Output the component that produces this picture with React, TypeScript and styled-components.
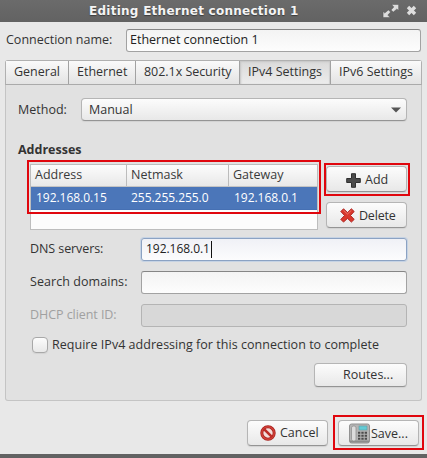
import React from "react";
import styled, { createGlobalStyle, css } from "styled-components";

const GlobalStyle = createGlobalStyle`
  *, *::before, *::after { box-sizing: border-box; }
  body { margin: 0; }
`;

const Window = styled.div`
  width: 427px;
  height: 458px;
  display: flex;
  flex-direction: column;
  overflow: hidden;
  background: #e8e8e8;
  border-bottom: 4px solid #626262;
  color: #333;
  font-family: "Open Sans", "Noto Sans", sans-serif;
  font-size: 12.5px;
  line-height: 16px;
  white-space: nowrap;
`;

const Text = styled.span<{ $ls?: number }>`
  letter-spacing: ${(p) => p.$ls ?? 0}px;
`;

const Digits = styled.span`
  font-size: 12px;
  letter-spacing: -0.04px;
`;

const TitleBar = styled.header`
  height: 22px;
  flex: none;
  display: flex;
  align-items: center;
  padding: 0 10px 1px 89px;
  background: linear-gradient(#6b6b6b, #626262);
  color: #f4f4f4;
  font-family: "DejaVu Sans", sans-serif;
  font-weight: bold;
  font-size: 12px;
  text-shadow: 0 1px 1px #3c3c3c;
`;

const TitleIcons = styled.div`
  margin-left: auto;
  display: flex;
  align-items: center;
  gap: 6px;
`;

const NameRow = styled.div`
  height: 38px;
  flex: none;
  display: flex;
  align-items: flex-start;
  padding: 7px 6px 0 5px;
`;

const NameLabel = styled.div`
  width: 121px;
  padding: 3px 0 0 1px;
`;

const Entry = styled.div<{ $state?: "focus" | "disabled" }>`
  flex: 1;
  height: 23px;
  display: flex;
  align-items: center;
  padding: 0 4px 1px 3px;
  border: 1px solid #a2a2a2;
  border-top-color: #858585;
  border-radius: 3px;
  background: linear-gradient(#f3f3f3, #fdfdfd);
  color: #222;
  ${(p) =>
    p.$state === "focus" &&
    css`
      padding-left: 4px;
      border-color: #8ba2c3;
      background: linear-gradient(#f0f1f6, #fcfcfd);
      box-shadow: 0 0 0 1px #c6d3e4;
    `}
  ${(p) =>
    p.$state === "disabled" &&
    css`
      border-color: #b4b4b4;
      background: #d8d8d8;
    `}
`;

const Caret = styled.i`
  width: 1px;
  height: 17px;
  margin-left: 1px;
  background: #111;
`;

const Tabs = styled.nav`
  height: 25px;
  flex: none;
  margin: 0 5px;
  display: grid;
  grid-template-columns: 62px 67px 104px 91px 91px;
  border: 1px solid #b0b0b0;
  border-bottom-color: #aaa;
  border-radius: 3px 3px 0 0;
`;

const Tab = styled.div<{ $active?: boolean }>`
  display: flex;
  align-items: center;
  padding: 0 0 2px 8px;
  border-left: 1px solid #a2a2a2;
  background: linear-gradient(#fafafa, #e3e3e3);
  &:first-child { border-left: 0; }
  ${(p) =>
    p.$active &&
    css`
      background: linear-gradient(#dadada, #ececec);
      box-shadow: inset 1px 1px 2px #c5c5c5, inset -1px 0 1px #cfcfcf;
    `}
`;

const Panel = styled.main`
  height: 316px;
  flex: none;
  margin: 0 5px;
  padding: 13px 14px 0 12px;
  border: 1px solid #c4c4c4;
  border-top: 0;
  border-radius: 0 0 3px 3px;
  background: #e1e1e1;
`;

const MethodRow = styled.div`
  display: flex;
  align-items: center;
  height: 23px;
`;

const MethodLabel = styled.div`
  width: 63px;
`;

const raised = css`
  border: 1px solid #b5b5b5;
  border-bottom-color: #949494;
  border-radius: 4px;
  background: linear-gradient(#fcfcfc, #e8e8e8);
  box-shadow: 0 1px 1px #d2d2d2;
`;

const Combo = styled.div`
  ${raised}
  flex: 1;
  height: 23px;
  display: flex;
  align-items: center;
  justify-content: space-between;
  padding: 0 5px 0 7px;
`;

const Heading = styled.h2`
  margin: 20px 0 0;
  height: 19px;
  font-size: 12.5px;
  line-height: 18px;
`;

const AddressArea = styled.section`
  display: flex;
  gap: 3px;
  margin-left: 9px;
  height: 75px;
`;

const TableColumn = styled.div`
  position: relative;
  flex: none;
  width: 294px;
  padding: 4px 3px 0;
`;

const Table = styled.div`
  height: 66px;
  border: 1px solid #bdbdbd;
  background: #fcfcfc;
`;

const TableRow = styled.div<{ $selected?: boolean }>`
  display: grid;
  grid-template-columns: 95px 102px 1fr;
  height: ${(p) => (p.$selected ? 23 : 22)}px;
  color: ${(p) => (p.$selected ? "#fff" : "#3a3a3a")};
  background: ${(p) => (p.$selected ? "#4b76b9" : "linear-gradient(#fcfcfc, #e8e8e8)")};
  border-bottom: 1px solid ${(p) => (p.$selected ? "#4670b3" : "#c4c4c4")};
`;

const Cell = styled.div<{ $head?: boolean }>`
  display: flex;
  align-items: center;
  padding: 0 0 1px 4px;
  border-left: 1px solid ${(p) => (p.$head ? "#bcbcbc" : "transparent")};
  &:first-child {
    border-left: 0;
    padding-left: ${(p) => (p.$head ? 4 : 5)}px;
  }
  &:last-child { padding-left: ${(p) => (p.$head ? 4 : 5)}px; }
`;

const Mark = styled.div<{ $inset: string }>`
  position: absolute;
  inset: ${(p) => p.$inset};
  border: 2px solid #e0060d;
  pointer-events: none;
`;

const ButtonColumn = styled.div`
  display: flex;
  flex-direction: column;
  gap: 10px;
  padding: 6px 0 0 2px;
`;

const Button = styled.div<{ $width?: number; $height?: number; $pad?: string; $gap?: number }>`
  ${raised}
  position: relative;
  width: ${(p) => p.$width ?? 81}px;
  height: ${(p) => p.$height ?? 26}px;
  display: flex;
  align-items: center;
  gap: ${(p) => p.$gap ?? 5}px;
  padding: ${(p) => p.$pad ?? "0"};
  svg { flex: none; }
`;

const Fields = styled.section`
  display: grid;
  row-gap: 10px;
  margin: 3px 0 0 12px;
`;

const Field = styled.div<{ $muted?: boolean }>`
  display: grid;
  grid-template-columns: 111px 1fr;
  align-items: center;
  color: ${(p) => (p.$muted ? "#a0a0a0" : "inherit")};
  > span { padding-bottom: 1px; }
`;

const CheckRow = styled.div`
  display: flex;
  align-items: center;
  gap: 4px;
  margin: 10px 0 10px 14px;
  height: 16px;
`;

const CheckBox = styled.span`
  ${raised}
  width: 16px;
  height: 16px;
  border-color: #a8a8a8;
`;

const RoutesRow = styled.div`
  display: flex;
  justify-content: flex-end;
`;

const Footer = styled.footer`
  display: flex;
  justify-content: flex-end;
  gap: 10px;
  padding: 19px 8px 0 0;
`;

const ExpandIcon = () => (
  <svg width="18" height="16" viewBox="0 0 18 16">
    <g fill="#dcdcdc" stroke="#484848" strokeWidth=".4">
      <path d="M9.600 1.500h7v6l-1.700-1.600-3.600 3.200-2.200-2.200 2.800-3z" />
      <path d="M8.100 14.500h-7v-6l1.700 1.600 3.600-3.200 2.200 2.200-2.800 3z" />
    </g>
  </svg>
);

const CloseIcon = () => (
  <svg width="11" height="11" viewBox="0 0 11 11">
    <path d="M2 2l7 7M9 2L2 9" stroke="#dedede" strokeWidth="3.400" />
  </svg>
);

const ArrowIcon = () => (
  <svg width="10" height="6" viewBox="0 0 10 6">
    <path d="M0 .5h10L5 5.500z" fill="#555" />
  </svg>
);

const PlusIcon = () => (
  <svg width="15" height="15" viewBox="0 0 15 15">
    <path d="M5.500.7h4v4.800h4.800v4H9.500v4.800h-4V9.500H.7v-4h4.800z" fill="#4b4b4b" stroke="#303030" />
  </svg>
);

const DeleteIcon = () => (
  <svg width="15" height="15" viewBox="0 0 15 15">
    <path
      d="M3.500.8L7.500 4.500 11.400.8l2.800 2.700-3.700 4 3.700 3.900-2.800 2.700-3.900-3.700-4 3.700L.8 11.400l3.700-3.900-3.700-4z"
      fill="#d9392d"
      stroke="#a91f1c"
      strokeWidth=".9"
    />
    <path d="M3.500 2.300l4 3.700 3.900-3.700" fill="none" stroke="#ec7a6d" />
  </svg>
);

const CancelIcon = () => (
  <svg width="16" height="16" viewBox="0 0 16 16">
    <circle cx="8" cy="8" r="6.200" fill="#f3dedb" stroke="#a8201d" strokeWidth="3" />
    <circle cx="8" cy="8" r="6.200" fill="none" stroke="#cf4038" strokeWidth="1.500" />
    <path d="M3.800 3.800l8.400 8.400" stroke="#bc2c27" strokeWidth="2.600" />
  </svg>
);

const PhoneIcon = () => (
  <svg width="21" height="21" viewBox="0 0 21 21">
    <rect x=".5" y="1" width="20" height="19" rx="2" fill="#b4b4b4" stroke="#929292" />
    <path d="M1 17.500h19v2H1z" fill="#8c8c8c" />
    <rect x="2.500" y="3" width="4.500" height="15" rx="1.800" fill="#dcdcdc" stroke="#909090" strokeWidth=".8" />
    <rect x="10" y="3" width="8" height="4" fill="#63cbd5" stroke="#5e9da3" strokeWidth=".6" />
    <path d="M9 9.700h9M9 12.700h9M9 15.700h9" stroke="#4b4b4b" strokeWidth="1.900" strokeDasharray="2.300 1.050" />
  </svg>
);

export default function App() {
  return (
    <>
      <GlobalStyle />
      <Window>
        <TitleBar>
          <Text $ls={0.26}>Editing Ethernet connection 1</Text>
          <TitleIcons>
            <ExpandIcon />
            <CloseIcon />
          </TitleIcons>
        </TitleBar>
        <NameRow>
          <NameLabel><Text>Connection name:</Text></NameLabel>
          <Entry><Text>Ethernet connection 1</Text></Entry>
        </NameRow>
        <Tabs>
          <Tab><Text>General</Text></Tab>
          <Tab><Text>Ethernet</Text></Tab>
          <Tab><Text $ls={-0.04}>802.1x Security</Text></Tab>
          <Tab $active><Text>IPv4 Settings</Text></Tab>
          <Tab><Text>IPv6 Settings</Text></Tab>
        </Tabs>
        <Panel>
          <MethodRow>
            <MethodLabel><Text>Method:</Text></MethodLabel>
            <Combo><Text>Manual</Text><ArrowIcon /></Combo>
          </MethodRow>
          <Heading><Text>Addresses</Text></Heading>
          <AddressArea>
            <TableColumn>
              <Table>
                <TableRow>
                  <Cell $head><Text>Address</Text></Cell>
                  <Cell $head><Text>Netmask</Text></Cell>
                  <Cell $head><Text>Gateway</Text></Cell>
                </TableRow>
                <TableRow $selected>
                  <Cell><Digits>192.168.0.15</Digits></Cell>
                  <Cell><Digits>255.255.255.0</Digits></Cell>
                  <Cell><Digits>192.168.0.1</Digits></Cell>
                </TableRow>
              </Table>
              <Mark $inset="0 0 21px 0" />
            </TableColumn>
            <ButtonColumn>
              <Button $pad="2px 0 0 19px" $gap={4}>
                <PlusIcon /><Text>Add</Text>
                <Mark $inset="-4px -4px -5px -3px" />
              </Button>
              <Button $pad="1px 0 0 13px" $gap={4}>
                <DeleteIcon /><Text $ls={-0.2}>Delete</Text>
              </Button>
            </ButtonColumn>
          </AddressArea>
          <Fields>
            <Field>
              <Text $ls={-0.08}>DNS servers:</Text>
              <Entry $state="focus"><Digits>192.168.0.1</Digits><Caret /></Entry>
            </Field>
            <Field><Text $ls={0.06}>Search domains:</Text><Entry /></Field>
            <Field $muted><Text $ls={-0.06}>DHCP client ID:</Text><Entry $state="disabled" /></Field>
          </Fields>
          <CheckRow>
            <CheckBox />
            <Text $ls={0.03}>Require IPv4 addressing for this connection to complete</Text>
          </CheckRow>
          <RoutesRow>
            <Button $width={93} $height={24} $pad="0 0 1px 28px"><Text>Routes...</Text></Button>
          </RoutesRow>
        </Panel>
        <Footer>
          <Button $pad="0 0 0 12px" $gap={4}>
            <CancelIcon /><Text>Cancel</Text>
          </Button>
          <Button $pad="1px 0 0 10px" $gap={1}>
            <PhoneIcon /><Text>Save...</Text>
            <Mark $inset="-6px -6px -5px -6px" />
          </Button>
        </Footer>
      </Window>
    </>
  );
}
